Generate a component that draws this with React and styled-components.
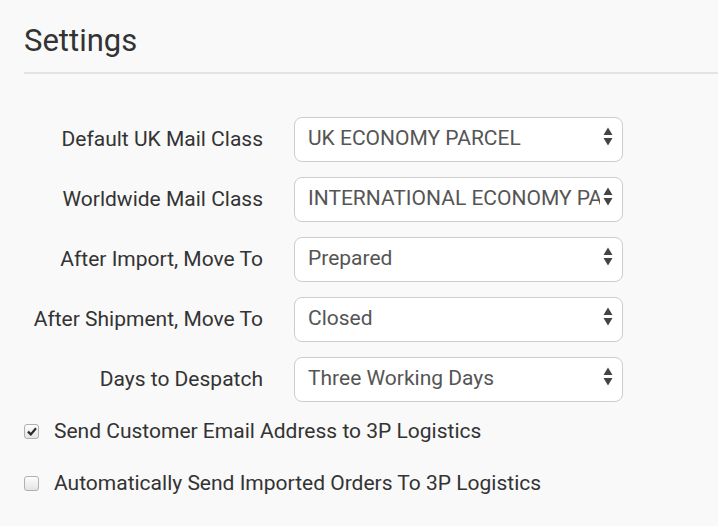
import styled, { createGlobalStyle } from 'styled-components';
import { Fragment } from 'react';

const Global = createGlobalStyle`
    html, body {
        margin: 0;
        padding: 0;
        background: #f9f9f9;
        font-family: Roboto, "Liberation Sans", sans-serif;
        color: #333;
    }
`;

const PAGE = styled.div`
    width: 718px;
    height: 526px;
    overflow: hidden;
    padding-left: 24px;
    box-sizing: border-box;
`;

const HEADER = styled.div`
    padding: 23px 0 13px;
    border-bottom: 2px solid #e3e3e3;
    margin-bottom: 43px;

    h1 {
        margin: 0;
        font-size: 31px;
        font-weight: 400;
        line-height: 36px;
        color: #333;
    }
`;

const FORM = styled.div`
    display: grid;
    grid-template-columns: 239px 329px;
    column-gap: 31px;
    row-gap: 15px;
    align-items: center;
`;

const LABEL = styled.label`
    text-align: right;
    font-size: 21px;
    color: #333;
    white-space: nowrap;
    padding-bottom: 2px;
`;

const SELECTWRAP = styled.div`
    position: relative;
    height: 45px;
    background: #fff;
    border: 1px solid #cdcdcd;
    border-radius: 8px;
    box-sizing: border-box;
    display: flex;
    align-items: center;
    padding: 0 22px 4px 13px;
    overflow: hidden;

    span {
        font-size: 21px;
        color: #555;
        white-space: nowrap;
        overflow: hidden;
    }

    svg {
        position: absolute;
        right: 9px;
        top: 9px;
    }
`;

const CHECKS = styled.div`
    margin-top: 17px;
    display: flex;
    flex-direction: column;
    gap: 28px;
`;

const CHECKROW = styled.label`
    display: flex;
    align-items: center;
    gap: 15px;
    font-size: 21px;
    line-height: 24px;
    color: #333;
`;

const BOX = styled.span`
    width: 15px;
    height: 15px;
    box-sizing: border-box;
    border: 1px solid #b0b0b0;
    border-radius: 3px;
    background: linear-gradient(#fdfdfd, #e4e4e4);
    display: flex;
    align-items: center;
    justify-content: center;
`;

const Arrows = () => (
    <svg width="10" height="19" viewBox="0 0 10 19">
        <path d="M5 0.5 L9.5 8 H0.5 Z" fill="#444" />
        <path d="M5 18.5 L9.5 11 H0.5 Z" fill="#444" />
    </svg>
);

const Select = ({ value }) => (
    <SELECTWRAP>
        <span>{value}</span>
        <Arrows />
    </SELECTWRAP>
);

const Checkbox = ({ checked, label }) => (
    <CHECKROW>
        <BOX>
            {checked && (
                <svg width="10" height="9" viewBox="0 0 10 9">
                    <path d="M1 4.6 L3.8 7.4 L9 1.2" stroke="#2a2a2a" strokeWidth="2.2" fill="none" />
                </svg>
            )}
        </BOX>
        {label}
    </CHECKROW>
);

const rows = [
    ['Default UK Mail Class', 'UK ECONOMY PARCEL'],
    ['Worldwide Mail Class', 'INTERNATIONAL ECONOMY PARCEL'],
    ['After Import, Move To', 'Prepared'],
    ['After Shipment, Move To', 'Closed'],
    ['Days to Despatch', 'Three Working Days'],
];

export default function App() {
    return (
        <PAGE>
            <Global />
            <HEADER>
                <h1>Settings</h1>
            </HEADER>
            <FORM>
                {rows.map(([label, value]) => (
                    <Fragment key={label}>
                        <LABEL>{label}</LABEL>
                        <Select value={value} />
                    </Fragment>
                ))}
            </FORM>
            <CHECKS>
                <Checkbox checked label="Send Customer Email Address to 3P Logistics" />
                <Checkbox label="Automatically Send Imported Orders To 3P Logistics" />
            </CHECKS>
        </PAGE>
    );
}
